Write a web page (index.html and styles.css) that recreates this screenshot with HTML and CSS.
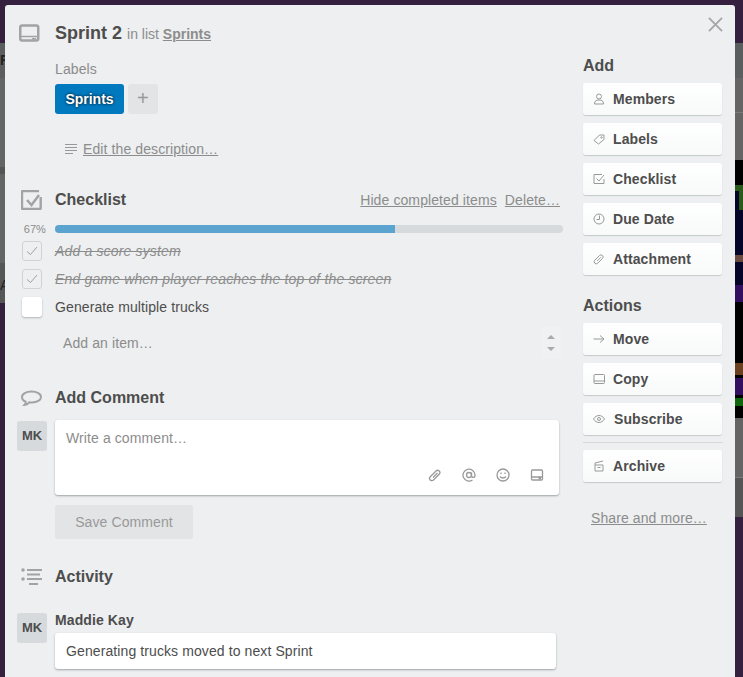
FILE: index.html
```html
<!DOCTYPE html>
<html lang="en">
<head>
  <meta charset="UTF-8">
  <title>Sprint 2</title>
  <link rel="stylesheet" href="styles.css">
</head>
<body>

  <!-- board behind the dialog -->
  <div class="board">
    <div class="edge">
      <div class="s-top"></div>
      <div class="s-head">F</div>
      <div class="s-gray s-left1"></div>
      <div class="s-line"></div>
      <div class="s-gray s-left2"></div>
      <div class="s-head s-foot">A</div>
    </div>
    <div class="edge">
      <div class="s-top"></div>
      <div class="s-head"></div>
      <div class="s-gray s-r1"></div>
      <div class="s-rule"></div>
      <div class="s-gray s-r2"></div>
      <div class="s-black s-g1"></div>
      <div class="s-green-top"></div>
      <div class="s-green-side"></div>
      <div class="s-navy s-g2"></div>
      <div class="s-brown"></div>
      <div class="s-navy s-g3"></div>
      <div class="s-violet"></div>
      <div class="s-black s-g4"></div>
      <div class="s-red"></div>
      <div class="s-black s-g5"></div>
      <div class="s-violet"></div>
      <div class="s-black s-g5"></div>
      <div class="s-green2"></div>
      <div class="s-black s-g6"></div>
      <div class="s-gray s-r3"></div>
      <div class="s-rule"></div>
      <div class="s-head s-r4"></div>
    </div>
  </div>

  <div class="modal">
    <svg class="close" viewBox="0 0 16 16"><path d="M1 1l14 14M15 1L1 15"/></svg>

    <div class="main">
      <div class="row title-row">
        <svg class="ic-big" viewBox="0 0 22 20"><rect x="1.250" y="1.500" width="18" height="15" rx="2"/><path class="thin" d="M2 12.500h17M13 14.800h4"/></svg>
        <h2 class="title">Sprint 2 <span class="in-list">in list <a href="#">Sprints</a></span></h2>
      </div>

      <div class="labels-block">
        <div class="muted">Labels</div>
        <div class="labels">
          <span class="label">Sprints</span>
          <span class="label-add">+</span>
        </div>
      </div>

      <div class="edit-desc">
        <svg class="ic-lines" viewBox="0 0 14 12"><path d="M1 1.500h12M1 4.500h12M1 7.500h12M1 10.500h8"/></svg>
        <a href="#">Edit the description…</a>
      </div>

      <div class="row head-row checklist-head">
        <svg class="ic-big ic-shift ic-check" viewBox="0 0 22 20"><path d="M19.700 7v11a1 1 0 0 1-1 1H2a1 1 0 0 1-1-1V2a1 1 0 0 1 1-1h16"/><path d="M6 10l4.500 5L18 5"/></svg>
        <h3>Checklist</h3>
        <div class="head-links"><a href="#">Hide completed items</a><a href="#">Delete…</a></div>
      </div>

      <div class="progress">
        <span class="pct">67%</span>
        <div class="track"><div class="fill" style="width: 67%"></div></div>
      </div>

      <div class="item done">
        <span class="box"><svg viewBox="0 0 12 10"><path d="M1 5.500l3.500 3L11 1"/></svg></span>
        <span>Add a score system</span>
      </div>
      <div class="item done">
        <span class="box"><svg viewBox="0 0 12 10"><path d="M1 5.500l3.500 3L11 1"/></svg></span>
        <span>End game when player reaches the top of the screen</span>
      </div>
      <div class="item">
        <span class="box"></span>
        <span>Generate multiple trucks</span>
      </div>

      <div class="add-item">
        <span>Add an item…</span>
        <span class="spinner"><i class="up"></i><i class="down"></i></span>
      </div>

      <div class="row head-row comment-head">
        <svg class="ic-big ic-shift" viewBox="0 0 22 20"><path transform="translate(-.500 1.500)" d="M11 2c5.500 0 9.500 2.300 9.500 5.500S16.500 13 11.500 13c-1 0-2 0-2.800-.2C7.500 14.500 6 15.500 4 15.500c1-1 1.300-2 1.200-3.300C2.800 11.300 1.500 9.500 1.500 7.500 1.500 4.300 5.500 2 11 2z"/></svg>
        <h3>Add Comment</h3>
      </div>

      <div class="row comment-row">
        <div class="avatar">MK</div>
        <div class="comment-box">
          <div class="placeholder">Write a comment…</div>
          <div class="comment-tools">
            <svg class="tool" viewBox="0 0 14 14"><path d="M2.500 8.500L8 3a2.200 2.200 0 0 1 3.200 3.200L5.500 12a2.200 2.200 0 0 1-3.200-3.300zM5 9.500L9.500 5"/></svg>
            <svg class="tool" viewBox="0 0 14 14"><circle cx="7" cy="7" r="2.500"/><path d="M9.500 4.500V8a1.800 1.800 0 0 0 3.500 0V7a6 6 0 1 0-2.500 5"/></svg>
            <svg class="tool" viewBox="0 0 14 14"><circle cx="7" cy="7" r="6"/><path d="M4 8.500c1.500 2 4.500 2 6 0M5 4.500v1.500M9 4.500v1.500"/></svg>
            <svg class="tool" viewBox="0 0 14 14"><rect x="1.500" y="2" width="11" height="10" rx="1"/><path d="M2 9h10M8.500 10.500h2.500"/></svg>
          </div>
        </div>
      </div>

      <div class="save">Save Comment</div>

      <div class="row head-row activity-head">
        <svg class="ic-big ic-shift" viewBox="0 0 22 20"><path d="M6 3h15M6 7.500h13M6 12h15M8 17h9"/><circle class="dot" cx="2" cy="3" r="1.800"/><circle class="dot" cx="2" cy="12" r="1.800"/></svg>
        <h3>Activity</h3>
      </div>

      <div class="row activity-row">
        <div class="avatar">MK</div>
        <div class="entry">
          <div class="author">Maddie Kay</div>
          <div class="entry-text">Generating trucks moved to next Sprint</div>
        </div>
      </div>
    </div>

    <div class="side">
      <h4>Add</h4>
      <div class="btn"><svg viewBox="0 0 12 12"><circle cx="6" cy="3.500" r="2.500"/><path d="M1.500 11c0-3 1.500-4 4.500-4s4.500 1 4.500 4z"/></svg>Members</div>
      <div class="btn"><svg viewBox="0 0 12 12"><path d="M1 7.500L6.500 2H11v4.500L5.500 11z"/><circle cx="8.500" cy="4.500" r=".7"/></svg>Labels</div>
      <div class="btn"><svg viewBox="0 0 12 12"><path d="M11 6v4.500H1v-9h8M3.500 5.500L6 8l5-6"/></svg>Checklist</div>
      <div class="btn"><svg viewBox="0 0 12 12"><circle cx="6" cy="6" r="5"/><path d="M6.500 2.500v4H3.500"/></svg>Due Date</div>
      <div class="btn"><svg viewBox="0 0 12 12"><path d="M1.800 7.200L6.500 2.500a2 2 0 0 1 3 3L4.800 10.200a2 2 0 0 1-3-3zM4.200 8L8 4.200"/></svg>Attachment</div>

      <h4 class="actions">Actions</h4>
      <div class="btn"><svg viewBox="0 0 12 12"><path d="M.5 6h10.500M7 2.500L11 6 7 9.500"/></svg>Move</div>
      <div class="btn"><svg viewBox="0 0 12 12"><rect x="1" y="1.500" width="10.500" height="9" rx="1"/><path d="M1 8h10.500"/></svg>Copy</div>
      <div class="btn btn-sub"><svg viewBox="0 0 12 12"><path d="M.5 6C2 3.500 4 2.500 6 2.500S10 3.500 11.500 6C10 8.500 8 9.500 6 9.500S2 8.500.5 6z"/><circle cx="6" cy="6" r="1.500"/></svg>Subscribe</div>
      <hr class="sep">
      <div class="btn"><svg viewBox="0 0 12 12"><path d="M2 5h8v6H2zM2 5V3l8-2M4.500 7.500h3"/></svg>Archive</div>
      <a class="share" href="#">Share and more…</a>
    </div>
  </div>

</body>
</html>
```

FILE: styles.css
```css
html, body {
  margin: 0;
  height: 677px;
  overflow: hidden;
}

body {
  position: relative;
  background-color: #35213f;
  font-family: "Liberation Sans", Arial, sans-serif;
  font-size: 14px;
  line-height: 18px;
  letter-spacing: .1px;
  color: #4d4d4d;
}

a {
  color: #8c8c8c;
}

/* board strips */
.board {
  display: flex;
  justify-content: space-between;
}

.edge {
  width: 8px;
}

.s-top { height: 43px; background: #35213f; }
.s-head { height: 35px; background: #5a5e5e; color: #222; font-weight: bold; font-size: 14px; line-height: 35px; }
.s-gray { background: #646464; }
.s-left1 { height: 89px; }
.s-line { height: 7px; background: #555; }
.s-left2 { height: 89px; }
.s-foot { height: 40px; line-height: 44px; font-weight: normal; background: #565656; }
.s-r1 { height: 34px; }
.s-rule { height: 1px; background: #7a7a7a; }
.s-r2 { height: 47px; }
.s-black { background: #000; }
.s-navy { background: #05052a; }
.s-g1 { height: 25px; }
.s-green-top { height: 6px; background: #2a5a1a; }
.s-green-side { height: 19px; background: linear-gradient(90deg, #05052a 50%, #2a5a1a 50%); }
.s-g2 { height: 45px; }
.s-brown { height: 7px; background: #6a4a40; }
.s-g3 { height: 23px; }
.s-violet { height: 17px; background: #330f60; }
.s-g4 { height: 61px; }
.s-red { height: 12px; background: #6a4020; }
.s-g5 { height: 3px; }
.s-green2 { height: 8px; background: #0f660f; }
.s-g6 { height: 12px; }
.s-r3 { height: 59px; }
.s-r4 { height: 39px; background: #555; }

/* dialog */
.modal {
  position: absolute;
  left: 5px;
  top: 5px;
  width: 730px;
  height: 700px;
  background-color: #edeff0;
  border-radius: 3px;
  display: flex;
}

.close {
  position: absolute;
  left: 703px;
  top: 12px;
  width: 15px;
  height: 15px;
  fill: none;
  stroke: #a6a6a6;
  stroke-width: 2;
}

.main {
  width: 558px;
}

.side {
  width: 140px;
  margin-left: 20px;
  padding-top: 51px;
}

.row {
  display: flex;
  align-items: center;
}

.ic-big {
  width: 22px;
  height: 20px;
  margin-left: 14px;
  margin-right: 14px;
  flex: none;
  fill: none;
  stroke: #a3a3a3;
  stroke-width: 2;
}

.ic-big rect {
  stroke-width: 2.500;
}

.ic-big .thin {
  stroke-width: 1.500;
}

.ic-big .dot {
  fill: #a3a3a3;
  stroke: none;
}

.ic-shift {
  margin-left: 16px;
  margin-right: 12px;
}

.ic-check {
  stroke-width: 2.400;
}

.title-row {
  padding-top: 17px;
}

.title {
  margin: 0;
  font-size: 18px;
  line-height: 22px;
  font-weight: bold;
  letter-spacing: 0;
}

.in-list {
  font-size: 14px;
  font-weight: normal;
  color: #8c8c8c;
}

.in-list a {
  font-weight: bold;
}

.labels-block {
  margin: 15px 0 0 50px;
}

.muted {
  color: #8c8c8c;
}

.labels {
  display: flex;
  gap: 4px;
  margin-top: 6px;
}

.label {
  width: 69px;
  height: 30px;
  line-height: 30px;
  text-align: center;
  background-color: #0079bf;
  border-radius: 3px;
  color: #fff;
  font-weight: bold;
  letter-spacing: 0;
  text-shadow: 0 0 3px #000;
}

.label-add {
  width: 30px;
  height: 30px;
  line-height: 28px;
  text-align: center;
  background-color: #e2e4e6;
  border-radius: 3px;
  color: #999;
  font-size: 20px;
}

.edit-desc {
  display: flex;
  align-items: center;
  margin: 26px 0 0 59px;
}

.ic-lines {
  width: 14px;
  height: 12px;
  margin-right: 5px;
  fill: none;
  stroke: #999;
}

.head-row h3 {
  margin: 0;
  font-size: 16px;
  line-height: 20px;
  font-weight: bold;
  letter-spacing: 0;
}

.checklist-head {
  margin-top: 32px;
}

.head-links {
  margin-left: auto;
  display: flex;
  gap: 8px;
  margin-right: 3px;
}

.progress {
  display: flex;
  align-items: center;
  margin-top: 15px;
  height: 8px;
}

.pct {
  width: 41px;
  text-align: right;
  margin-right: 9px;
  font-size: 11px;
  color: #8c8c8c;
}

.track {
  width: 508px;
  height: 8px;
  background-color: #d6dadc;
  border-radius: 4px;
  overflow: hidden;
}

.fill {
  height: 8px;
  background-color: #5ba4cf;
}

.item {
  display: flex;
  align-items: center;
  height: 28px;
}

.progress + .item {
  margin-top: 4px;
}

.box {
  width: 20px;
  height: 20px;
  margin-left: 17px;
  margin-right: 13px;
  box-sizing: border-box;
  border-radius: 3px;
  background-color: #fff;
  box-shadow: 0 1px 2px #b0b5b8;
  display: flex;
  align-items: center;
  justify-content: center;
}

.box svg {
  width: 12px;
  height: 10px;
  fill: none;
  stroke: #a0a0a0;
}

.done .box {
  background-color: transparent;
  border: 1px solid #d0d3d6;
  box-shadow: none;
}

.done span:last-child {
  font-style: italic;
  text-decoration: line-through;
  letter-spacing: .16px;
  color: #8c8c8c;
}

.add-item {
  display: flex;
  justify-content: space-between;
  align-items: center;
  margin: 6px 0 0 58px;
  width: 498px;
  height: 32px;
  color: #8c8c8c;
}

.spinner {
  width: 20px;
  height: 32px;
  background-color: #f0f1f2;
  display: flex;
  flex-direction: column;
  align-items: center;
  justify-content: center;
  gap: 8px;
}

.spinner i {
  width: 0;
  height: 0;
  border-left: 4px solid transparent;
  border-right: 4px solid transparent;
}

.spinner .up { border-bottom: 4px solid #aaa; }
.spinner .down { border-top: 4px solid #aaa; }

.comment-head {
  margin-top: 29px;
}

.comment-row {
  align-items: flex-start;
  margin-top: 12px;
}

.avatar {
  width: 30px;
  height: 30px;
  margin-left: 12px;
  margin-right: 8px;
  flex: none;
  border-radius: 3px;
  background-color: #d6dadc;
  font-weight: bold;
  font-size: 13px;
  line-height: 30px;
  letter-spacing: 0;
  text-align: center;
}

.comment-row .avatar {
  margin-top: 1px;
}

.comment-box {
  width: 504px;
  height: 75px;
  box-sizing: border-box;
  padding: 9px 11px;
  background-color: #fff;
  border-radius: 3px;
  box-shadow: 0 1px 2px #9ea3a6;
  display: flex;
  flex-direction: column;
  justify-content: space-between;
}

.placeholder {
  color: #8c8c8c;
}

.comment-tools {
  display: flex;
  justify-content: flex-end;
  gap: 20px;
  padding-right: 4px;
  padding-bottom: 4px;
}

.tool {
  width: 14px;
  height: 14px;
  fill: none;
  stroke: #999;
  stroke-width: 1.300;
}

.save {
  width: 138px;
  height: 34px;
  line-height: 34px;
  margin: 10px 0 0 50px;
  text-align: center;
  background-color: #e2e4e6;
  border-radius: 3px;
  color: #999;
}

.activity-head {
  margin-top: 28px;
}

.activity-row {
  align-items: flex-start;
  margin-top: 16px;
}

.activity-row .avatar {
  margin-top: 10px;
}

.entry {
  width: 501px;
}

.author {
  font-weight: bold;
  margin-top: 8px;
  margin-bottom: 4px;
}

.entry-text {
  height: 36px;
  line-height: 36px;
  padding-left: 11px;
  background-color: #fff;
  border-radius: 3px;
  box-shadow: 0 1px 2px #9ea3a6;
}

/* sidebar */
.side h4 {
  margin: 0 0 7px;
  font-size: 16px;
  line-height: 20px;
  font-weight: bold;
  letter-spacing: 0;
}

.side .actions {
  margin-top: 21px;
}

.btn {
  display: flex;
  align-items: center;
  box-sizing: border-box;
  width: 139px;
  height: 32px;
  margin-bottom: 8px;
  padding-left: 10px;
  background: linear-gradient(#fff, #f8f9f9);
  border-radius: 3px;
  box-shadow: 0 1px 1px #c4c9cc;
  font-weight: bold;
}

.btn svg {
  width: 12px;
  height: 12px;
  margin-right: 8px;
  fill: none;
  stroke: #999;
  flex: none;
}

.btn-sub svg {
  margin-right: 9px;
}

.sep {
  width: 140px;
  height: 1px;
  margin: -1px 0 7px;
  border: 0;
  background-color: #d6dadc;
}

.share {
  display: block;
  margin: 27px 0 0 8px;
}
```
